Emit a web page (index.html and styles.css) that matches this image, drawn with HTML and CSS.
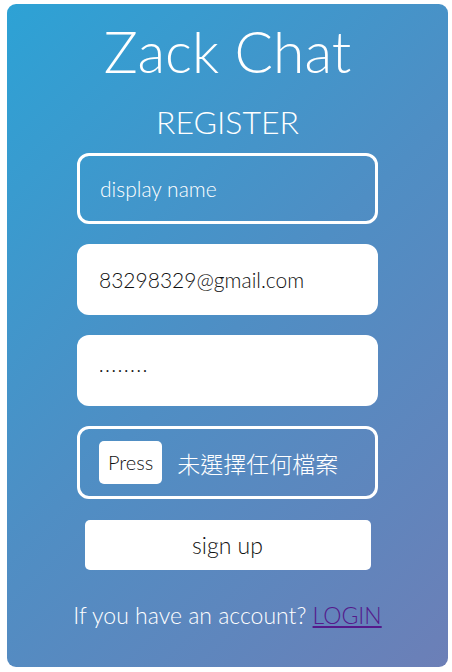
FILE: index.html
```html
<!DOCTYPE html>
<html>
<head>
<meta charset="utf-8">
<link rel="stylesheet" href="styles.css">
</head>
<body>
<div class="card">
  <h1 class="title">Zack Chat</h1>
  <h2 class="subtitle">REGISTER</h2>
  <form class="form">
    <input class="field field-outline" type="text" placeholder="display name">
    <input class="field field-filled" type="email" value="83298329@gmail.com">
    <input class="field field-filled password" type="password" value="12345678">
    <label class="field field-outline file">
      <span class="press">Press</span>
      <span class="file-text">未選擇任何檔案</span>
    </label>
    <button class="submit" type="button">sign up</button>
  </form>
  <p class="foot">If you have an account? <a class="login" href="#">LOGIN</a></p>
</div>
</body>
</html>
```
FILE: styles.css
```css
html, body {
  margin: 0;
  padding: 0;
  background: #ffffff;
}
body {
  padding: 4px 4px 5px 7px;
  font-family: "Lato", "Noto Sans CJK TC", sans-serif;
  font-weight: 300;
}
.card {
  height: 663px;
  box-sizing: border-box;
  border-radius: 9px;
  background: linear-gradient(135deg, #2da2d5 0%, #4f8ec4 50%, #6c7fb7 100%);
  display: flex;
  flex-direction: column;
  align-items: center;
  color: #ffffff;
}
.title {
  margin: 14px 0 0 0;
  font-size: 57px;
  font-weight: 300;
  line-height: 66px;
}
.subtitle {
  margin: 18px 0 0 0;
  font-size: 32px;
  font-weight: 300;
  line-height: 40px;
}
.form {
  margin-top: 11px;
  display: flex;
  flex-direction: column;
  align-items: center;
  gap: 20px;
}
.field {
  box-sizing: border-box;
  width: 301px;
  height: 71px;
  flex: none;
  border-radius: 12px;
  padding: 0 20px;
  font-family: inherit;
  font-weight: 300;
  font-size: 21px;
  outline: none;
}
.field-outline {
  border: 3px solid #ffffff;
  background: transparent;
  color: #ffffff;
}
.field-outline::placeholder {
  color: #ffffff;
  opacity: 1;
}
.field-filled {
  border: none;
  background: #ffffff;
  color: #111111;
  padding-left: 22px;
}
.password {
  font-family: "DejaVu Sans", sans-serif;
  font-size: 7px;
  letter-spacing: 3.8px;
  padding-left: 23px;
}
.file {
  height: 73px;
  display: flex;
  align-items: center;
  gap: 15px;
  padding-left: 19px;
}
.press {
  background: #ffffff;
  color: #111111;
  border-radius: 5px;
  padding: 0 9px;
  height: 43px;
  line-height: 43px;
  font-size: 20px;
}
.file-text {
  font-size: 23px;
  font-family: "Noto Sans CJK TC", sans-serif;
  font-weight: 300;
}
.submit {
  width: 286px;
  height: 50px;
  margin-top: 1px;
  border: none;
  border-radius: 5px;
  background: #ffffff;
  color: #111111;
  font-family: inherit;
  font-weight: 300;
  font-size: 23px;
  cursor: pointer;
}
.foot {
  margin: 30px 0 0 0;
  font-size: 23px;
  line-height: 30px;
}
.login {
  color: #551a8b;
}
```
